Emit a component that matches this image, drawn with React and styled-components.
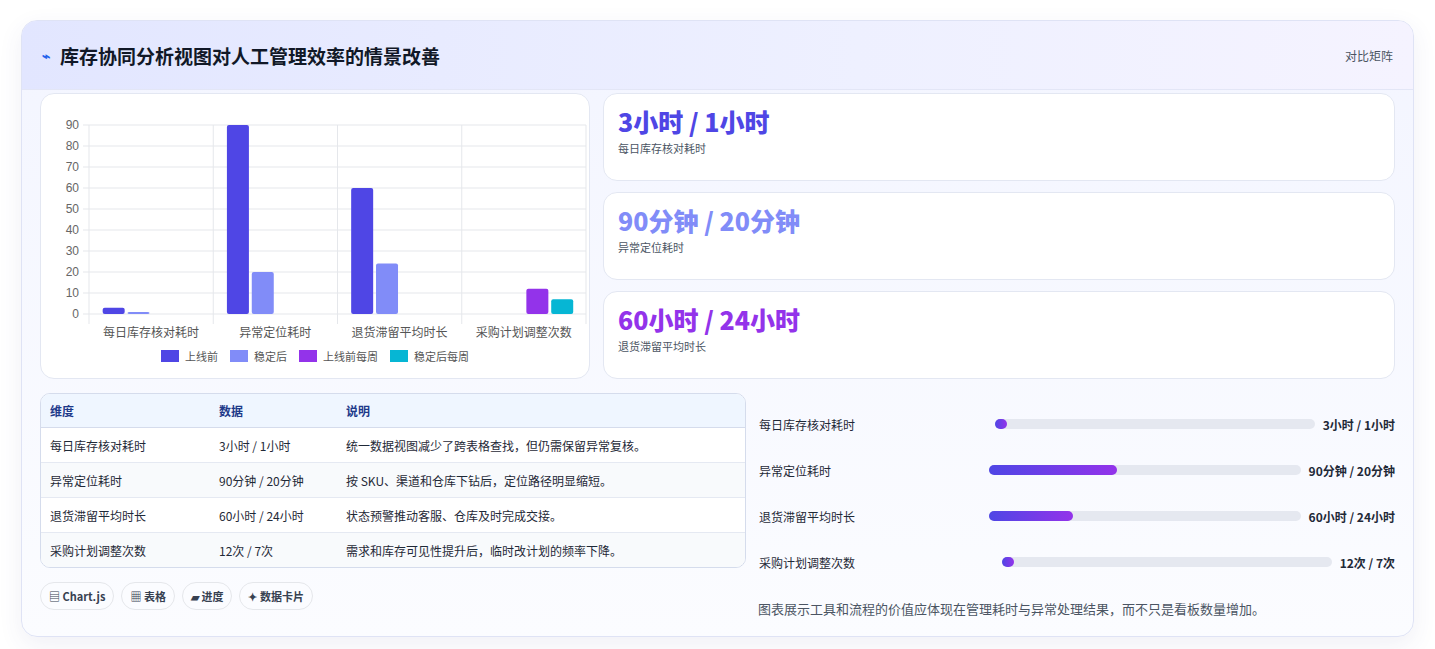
import styled, { createGlobalStyle } from 'styled-components';

const Global = createGlobalStyle`
  body { margin: 0; background: #fff; font-family: "Noto Sans CJK SC", "Noto Sans", sans-serif; }
`;

const Page = styled.div`
  padding: 20px 21px 20px 21px;
`;

const Panel = styled.div`
  border: 1px solid #dfe3f5;
  border-radius: 16px;
  overflow: hidden;
  background: linear-gradient(180deg, #f3f5ff 0%, #fbfcff 100%);
  box-shadow: 0 8px 24px rgba(60, 70, 140, 0.08);
`;

const Header = styled.div`
  height: 68px;
  display: flex;
  align-items: center;
  justify-content: space-between;
  padding: 0 20px 0 20px;
  background: linear-gradient(90deg, #e2e6ff 0%, #eef0ff 60%, #f5f3ff 100%);
  border-bottom: 1px solid #e3e6f6;
`;

const Title = styled.h1`
  margin: 0;
  font-size: 19px;
  font-weight: 700;
  color: #111827;
  display: flex;
  align-items: center;
  gap: 10px;
  span { color: #2563eb; font-size: 14px; }
`;

const HeaderTag = styled.div`
  font-size: 12px;
  color: #4b5563;
`;

const Body = styled.div`
  padding: 3px 18px 18px 18px;
`;

const TopRow = styled.div`
  display: grid;
  grid-template-columns: 550px 1fr;
  gap: 13px;
`;

const ChartCard = styled.div`
  background: #fff;
  border: 1px solid #e3e7f2;
  border-radius: 14px;
  height: 286px;
  padding: 8px 8px 0 8px;
  box-sizing: border-box;
`;

const Legend = styled.div`
  display: flex;
  justify-content: center;
  gap: 12px;
  font-size: 11px;
  color: #555;
  margin-top: 2px;
`;

const LegendItem = styled.div`
  display: flex;
  align-items: center;
  gap: 6px;
  &::before {
    content: '';
    width: 18px;
    height: 12px;
    background: ${p => p.$c};
  }
`;

const Stats = styled.div`
  display: flex;
  flex-direction: column;
  gap: 11px;
`;

const StatCard = styled.div`
  background: #fff;
  border: 1px solid #e3e7f2;
  border-radius: 14px;
  height: 88px;
  box-sizing: border-box;
  padding: 10px 14px;
`;

const StatValue = styled.div`
  font-size: 25px;
  font-weight: 800;
  color: ${p => p.$c};
  line-height: 34px;
`;

const StatLabel = styled.div`
  font-size: 11px;
  color: #4b5563;
  margin-top: 2px;
`;

const BottomRow = styled.div`
  display: grid;
  grid-template-columns: 706px 1fr;
  gap: 12px;
  margin-top: 14px;
`;

const TableWrap = styled.div`
  border: 1px solid #d5dcec;
  border-radius: 10px;
  overflow: hidden;
  background: #fff;
`;

const Table = styled.table`
  width: 100%;
  border-collapse: collapse;
  font-size: 12px;
  color: #1f2937;
  th {
    text-align: left;
    font-weight: 600;
    color: #1e3a8a;
    background: #eff6ff;
    height: 33px;
    border-bottom: 1px solid #d5dcec;
  }
  td { height: 34px; border-top: 1px solid #e5e9f2; }
  tbody tr:first-child td { border-top: none; }
  tbody tr:nth-child(even) td { background: #f8fafc; }
  th, td { padding: 0 9px; }
`;

const Chips = styled.div`
  display: flex;
  gap: 7px;
  margin-top: 14px;
`;

const Chip = styled.div`
  border: 1px solid #e5e7eb;
  border-radius: 14px;
  padding: 0 8px;
  height: 26px;
  display: flex;
  align-items: center;
  font-size: 11px;
  font-weight: 600;
  color: #374151;
  background: #fbfcff;
`;

const Progress = styled.div`
  display: flex;
  flex-direction: column;
  padding-top: 8px;
`;

const PRow = styled.div`
  display: grid;
  grid-template-columns: 1fr 1.4fr auto;
  align-items: center;
  gap: 8px;
  height: 46px;
  font-size: 12px;
  color: #1f2937;
  padding-left: 1px;
`;

const Track = styled.div`
  height: 10px;
  border-radius: 5px;
  background: #e5e8f0;
`;

const Fill = styled.div`
  height: 100%;
  min-width: 12px;
  border-radius: 5px;
  background: linear-gradient(90deg, #4f46e5, #9333ea);
`;

const PValue = styled.div`
  font-weight: 700;
  font-size: 12px;
`;

const Note = styled.div`
  font-size: 13px;
  color: #4b5563;
  margin-top: 14px;
`;

const cats = ['每日库存核对耗时', '异常定位耗时', '退货滞留平均时长', '采购计划调整次数'];
const series = [
  { c: '#4f46e5', v: [3, 90, 60, 0] },
  { c: '#818cf8', v: [1, 20, 24, 0] },
  { c: '#9333ea', v: [0, 0, 0, 12] },
  { c: '#06b6d4', v: [0, 0, 0, 7] },
];

function Chart() {
  const x0 = 40, x1 = 537, y0 = 212, yTop = 23;
  const cw = (x1 - x0) / 4;
  const sy = v => y0 - (v / 90) * (y0 - yTop);
  const ticks = [0, 10, 20, 30, 40, 50, 60, 70, 80, 90];
  const offs = [cw * 0.11, cw * 0.31, cw * 0.52, cw * 0.72];
  return (
    <svg width="540" height="244" style={{ display: 'block' }}>
      {ticks.map(t => (
        <g key={t}>
          <line x1={x0 - 6} x2={x1} y1={sy(t)} y2={sy(t)} stroke="#e5e7eb" />
          <text x={x0 - 10} y={sy(t) + 4} fontSize="12" fill="#666" textAnchor="end" fontFamily="Liberation Sans">{t}</text>
        </g>
      ))}
      {[0, 1, 2, 3, 4].map(i => (
        <line key={i} x1={x0 + cw * i} x2={x0 + cw * i} y1={yTop} y2={y0 + 10} stroke="#e5e7eb" />
      ))}
      {cats.map((c, i) => (
        <text key={c} x={x0 + cw * i + cw / 2} y={y0 + 23} fontSize="12" fill="#555" textAnchor="middle">{c}</text>
      ))}
      {series.map((s, si) => s.v.map((v, ci) => v > 0 && (
        <rect key={si + '-' + ci} x={x0 + cw * ci + offs[si]} y={sy(v)} width="22" height={y0 - sy(v)} rx="2" fill={s.c} />
      )))}
    </svg>
  );
}

const stats = [
  { v: '3小时 / 1小时', l: '每日库存核对耗时', c: '#4f46e5' },
  { v: '90分钟 / 20分钟', l: '异常定位耗时', c: '#818cf8' },
  { v: '60小时 / 24小时', l: '退货滞留平均时长', c: '#9333ea' },
];

const rows = [
  ['每日库存核对耗时', '3小时 / 1小时', '统一数据视图减少了跨表格查找，但仍需保留异常复核。'],
  ['异常定位耗时', '90分钟 / 20分钟', '按 SKU、渠道和仓库下钻后，定位路径明显缩短。'],
  ['退货滞留平均时长', '60小时 / 24小时', '状态预警推动客服、仓库及时完成交接。'],
  ['采购计划调整次数', '12次 / 7次', '需求和库存可见性提升后，临时改计划的频率下降。'],
];

const bars = [
  ['每日库存核对耗时', 2, '3小时 / 1小时'],
  ['异常定位耗时', 41, '90分钟 / 20分钟'],
  ['退货滞留平均时长', 27, '60小时 / 24小时'],
  ['采购计划调整次数', 2, '12次 / 7次'],
];

export default function App() {
  return (
    <Page>
      <Global />
      <Panel>
        <Header>
          <Title><span>⌁</span>库存协同分析视图对人工管理效率的情景改善</Title>
          <HeaderTag>对比矩阵</HeaderTag>
        </Header>
        <Body>
          <TopRow>
            <ChartCard>
              <Chart />
              <Legend>
                <LegendItem $c="#4f46e5">上线前</LegendItem>
                <LegendItem $c="#818cf8">稳定后</LegendItem>
                <LegendItem $c="#9333ea">上线前每周</LegendItem>
                <LegendItem $c="#06b6d4">稳定后每周</LegendItem>
              </Legend>
            </ChartCard>
            <Stats>
              {stats.map(s => (
                <StatCard key={s.l}>
                  <StatValue $c={s.c}>{s.v}</StatValue>
                  <StatLabel>{s.l}</StatLabel>
                </StatCard>
              ))}
            </Stats>
          </TopRow>
          <BottomRow>
            <div>
              <TableWrap>
                <Table>
                  <thead>
                    <tr><th style={{ width: 151 }}>维度</th><th style={{ width: 109 }}>数据</th><th>说明</th></tr>
                  </thead>
                  <tbody>
                    {rows.map(r => (
                      <tr key={r[0]}>{r.map(c => <td key={c}>{c}</td>)}</tr>
                    ))}
                  </tbody>
                </Table>
              </TableWrap>
              <Chips>
                <Chip>▤ Chart.js</Chip>
                <Chip>▦ 表格</Chip>
                <Chip>▰ 进度</Chip>
                <Chip>✦ 数据卡片</Chip>
              </Chips>
            </div>
            <div>
              <Progress>
                {bars.map(b => (
                  <PRow key={b[0]}>
                    <span>{b[0]}</span>
                    <Track><Fill style={{ width: b[1] + '%' }} /></Track>
                    <PValue>{b[2]}</PValue>
                  </PRow>
                ))}
              </Progress>
              <Note>图表展示工具和流程的价值应体现在管理耗时与异常处理结果，而不只是看板数量增加。</Note>
            </div>
          </BottomRow>
        </Body>
      </Panel>
    </Page>
  );
}
